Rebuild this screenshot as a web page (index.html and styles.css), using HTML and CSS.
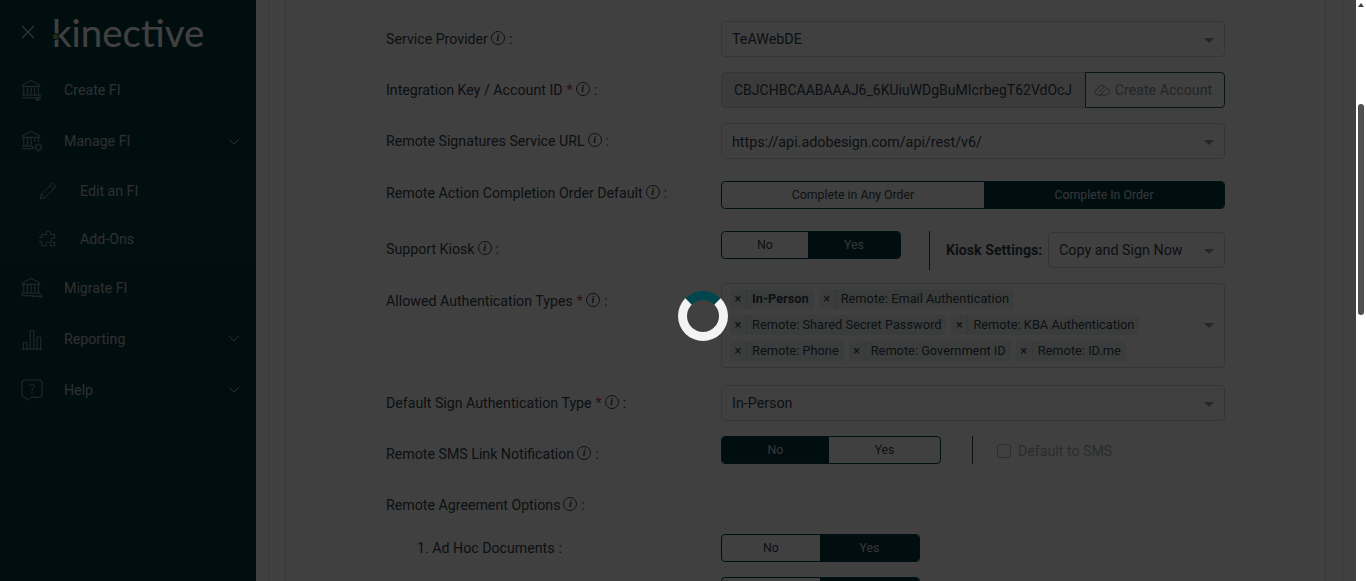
FILE: index.html
```html
<!DOCTYPE html>
<html lang="en">
<head>
    <meta charset="UTF-8">
    <meta name="viewport" content="width=device-width, initial-scale=1.0">
    <title>Edit an FI</title>
    <link rel="stylesheet" href="styles.css">
</head>
<body>

<div class="app">
    <aside class="sidebar">
        <div class="brand">
            <svg class="close-icon" viewBox="0 0 14 14"><path d="M1 1l12 12M13 1L1 13"/></svg>
            <span class="logo">kinective<i class="logo-dot"></i></span>
        </div>

        <nav class="menu">
            <a class="menu-item menu-item-a">
                <svg class="menu-icon" viewBox="0 0 24 24"><path d="M1.500 6.500L11 1.500l9.500 5v1.500h-19zM3 8v9M19 8v9M7 8v9M11 8v9M15 8v9M1 17.500h20v3H1M18 19v5M15.500 22.500h6"/></svg>
                <span class="menu-text">Create FI</span>
            </a>
            <a class="menu-item menu-item-b">
                <svg class="menu-icon" viewBox="0 0 24 24"><path d="M1.500 6.500L11 1.500l9.500 5v1.500h-19zM3 8v9M19 8v5M7 8v9M11 8v9M15 8v5M1 17.500h12v3H1M19 14v2M19 22v2M14 19h2M22 19h2M15.500 15.500l1.500 1.500M21 21l1.500 1.500M22.500 15.500L21 17M17 21l-1.500 1.500"/><circle cx="19" cy="19" r="3"/></svg>
                <span class="menu-text">Manage FI</span>
                <svg class="chevron" viewBox="0 0 12 7"><path d="M1 1l5 5 5-5"/></svg>
            </a>
            <div class="submenu">
                <a class="sub-item">
                    <svg class="menu-icon" viewBox="0 0 20 20"><path d="M1.500 18.500l1-5L13.500 2.500a2 2 0 0 1 3 0l1 1a2 2 0 0 1 0 3L6.500 17.500zM2.500 13.500l4 4M12 4l4 4"/></svg>
                    <span class="menu-text">Edit an FI</span>
                </a>
                <a class="sub-item sub-item-b">
                    <svg class="menu-icon" viewBox="0 0 20 20"><path d="M8 3.500a2.500 2.500 0 0 1 5 0c0 .8-.5 1-.5 1.500h5v4.500c-.5 0-.8-.5-1.500-.5a2.500 2.500 0 0 0 0 5c.7 0 1-.5 1.500-.5v4h-5c0-.5.500-.8.500-1.500a2.500 2.500 0 0 0-5 0c0 .7.500 1 .500 1.500H3v-5c-.5 0-.8.500-1.500.500a2.500 2.500 0 0 1 0-5C2.200 8 2.500 8.500 3 8.500V5h5.500C8.500 4.500 8 4.300 8 3.500z"/></svg>
                    <span class="menu-text">Add-Ons</span>
                </a>
            </div>
            <a class="menu-item menu-item-b">
                <svg class="menu-icon" viewBox="0 0 24 24"><path d="M1.500 6.500L11 1.500l9.500 5v1.500h-19zM3 8v9M19 8v9M7 8v9M11 8v9M15 8v9M1 17.500h20M1 17.500v3h13M12 21h11M20 18l3 3-3 3"/></svg>
                <span class="menu-text">Migrate FI</span>
            </a>
            <a class="menu-item">
                <svg class="menu-icon" viewBox="0 0 24 24"><path d="M1 23h22M2.500 23v-7h4v7M10 23V3h4v20M17.500 23V10h4v13"/></svg>
                <span class="menu-text">Reporting</span>
                <svg class="chevron" viewBox="0 0 12 7"><path d="M1 1l5 5 5-5"/></svg>
            </a>
            <a class="menu-item">
                <svg class="menu-icon" viewBox="0 0 24 24"><path d="M4 1h16a3 3 0 0 1 3 3v13a3 3 0 0 1-3 3H11l-4 3-2-3H4a3 3 0 0 1-3-3V4a3 3 0 0 1 3-3zM9.500 8a2.500 2.500 0 1 1 3.500 2.300c-.7.400-1 .9-1 1.700M12 14v2"/></svg>
                <span class="menu-text">Help</span>
                <svg class="chevron" viewBox="0 0 12 7"><path d="M1 1l5 5 5-5"/></svg>
            </a>
        </nav>
    </aside>

    <main class="content">
        <div class="card-outer">
            <div class="card-inner">
                <div class="form-grid">
                    <div class="form-label">Service Provider<i class="info">i</i><span class="colon">:</span></div>
                    <div class="select">TeAWebDE</div>

                    <div class="form-label">Integration Key / Account ID<b class="req">*</b><i class="info">i</i><span class="colon">:</span></div>
                    <div class="input-group">
                        <div class="input-value">CBJCHBCAABAAAJ6_6KUiuWDgBuMIcrbegT62VdOcJ</div>
                        <div class="input-btn">
                            <svg class="cloud-icon" viewBox="0 0 16 12"><path d="M4 11a3 3 0 0 1-.5-6A4.500 4.500 0 0 1 12 4a3.500 3.500 0 0 1 0 7zM5 8l5-5M6 11l6-6"/></svg>
                            Create Account
                        </div>
                    </div>

                    <div class="form-label">Remote Signatures Service URL<i class="info">i</i><span class="colon">:</span></div>
                    <div class="select select-url">https://api.adobesign.com/api/rest/v6/</div>

                    <div class="form-label label-toggle">Remote Action Completion Order Default<i class="info">i</i><span class="colon">:</span></div>
                    <div class="toggle">
                        <span class="seg seg-order-a">Complete in Any Order</span>
                        <span class="seg seg-order-b active">Complete In Order</span>
                    </div>

                    <div class="form-label">Support Kiosk<i class="info">i</i><span class="colon">:</span></div>
                    <div class="control-row">
                        <div class="toggle">
                            <span class="seg seg-87">No</span>
                            <span class="seg seg-92 active">Yes</span>
                        </div>
                        <span class="divider divider-kiosk"></span>
                        <strong class="kiosk-label">Kiosk Settings:</strong>
                        <div class="select select-kiosk">Copy and Sign Now</div>
                    </div>

                    <div class="form-label">Allowed Authentication Types<b class="req">*</b><i class="info">i</i><span class="colon">:</span></div>
                    <div class="multi-select">
                        <div class="chip-row">
                            <span class="chip"><i class="chip-x">×</i><b class="chip-text">In-Person</b></span>
                            <span class="chip"><i class="chip-x">×</i><span class="chip-text">Remote: Email Authentication</span></span>
                        </div>
                        <div class="chip-row">
                            <span class="chip"><i class="chip-x">×</i><span class="chip-text">Remote: Shared Secret Password</span></span>
                            <span class="chip"><i class="chip-x">×</i><span class="chip-text">Remote: KBA Authentication</span></span>
                        </div>
                        <div class="chip-row">
                            <span class="chip"><i class="chip-x">×</i><span class="chip-text">Remote: Phone</span></span>
                            <span class="chip"><i class="chip-x">×</i><span class="chip-text">Remote: Government ID</span></span>
                            <span class="chip"><i class="chip-x">×</i><span class="chip-text">Remote: ID.me</span></span>
                        </div>
                    </div>

                    <div class="form-label">Default Sign Authentication Type<b class="req">*</b><i class="info">i</i><span class="colon">:</span></div>
                    <div class="select">In-Person</div>

                    <div class="form-label">Remote SMS Link Notification<i class="info">i</i><span class="colon">:</span></div>
                    <div class="control-row">
                        <div class="toggle">
                            <span class="seg seg-108 active">No</span>
                            <span class="seg seg-111">Yes</span>
                        </div>
                        <span class="divider divider-sms"></span>
                        <span class="check-box"></span>
                        <span class="check-label">Default to SMS</span>
                    </div>

                    <div class="form-label form-label-wide">Remote Agreement Options<i class="info">i</i><span class="colon">:</span></div>

                    <div class="form-label label-sub">1. Ad Hoc Documents<span class="colon">:</span></div>
                    <div class="toggle">
                        <span class="seg seg-98">No</span>
                        <span class="seg seg-99 active">Yes</span>
                    </div>

                    <div class="form-label label-sub"></div>
                    <div class="toggle">
                        <span class="seg seg-98"></span>
                        <span class="seg seg-99 active"></span>
                    </div>
                </div>
            </div>
        </div>
    </main>

    <div class="scrollbar">
        <span class="scroll-arrow"></span>
        <span class="scroll-thumb"></span>
    </div>
</div>

<div class="overlay">
    <div class="spinner"></div>
</div>

</body>
</html>
```

FILE: styles.css
```css
* {
    box-sizing: border-box;
}

html, body {
    height: 100%;
    margin: 0;
    overflow: hidden;
}

body {
    font-family: Roboto, 'Liberation Sans', sans-serif;
    font-size: 14.2px;
    color: #36404a;
    background-color: #fff;
}

.app {
    display: flex;
    height: 100vh;
}

/* sidebar */
.sidebar {
    width: 256px;
    flex-shrink: 0;
    background-color: #043a42;
    color: #b8bcbe;
}

.brand {
    display: flex;
    align-items: center;
    height: 64px;
    padding-left: 21px;
}

.close-icon {
    width: 14px;
    height: 14px;
    fill: none;
    stroke: #d0d0d0;
    stroke-width: 1.2;
}

.logo {
    position: relative;
    margin-left: 17px;
    font-family: Lato, sans-serif;
    font-weight: 400;
    font-size: 38.500px;
    line-height: 40px;
    color: #fff;
}

.logo-dot {
    position: absolute;
    left: 1px;
    top: 22px;
    width: 5px;
    height: 5px;
    border-radius: 50%;
    background-color: #6ac04a;
    box-shadow: 0 0 0 1px #043a42;
}

.menu {
    display: flex;
    flex-direction: column;
}

.menu-item,
.sub-item {
    display: flex;
    align-items: center;
    height: 51px;
    padding-left: 21px;
}

.menu-item-a {
    height: 52px;
}

.menu-item-b {
    height: 50px;
}

.menu-icon {
    width: 22px;
    height: 22px;
    flex-shrink: 0;
    fill: none;
    stroke: #a8b0b0;
    stroke-width: 1;
}

.menu-text {
    margin-left: 21px;
    font-size: 14.2px;
}

.chevron {
    width: 12px;
    height: 7px;
    margin-left: auto;
    margin-right: 16px;
    fill: none;
    stroke: #a8b0b0;
    stroke-width: 1;
}

.submenu {
    background-color: #053d45;
}

.sub-item {
    height: 49px;
    padding-left: 39px;
}

.sub-item-b {
    height: 48px;
}

.sub-item .menu-icon {
    width: 18px;
    height: 18px;
}

.sub-item .menu-text {
    margin-left: 23px;
}

/* main area */
.content {
    flex: 1;
    padding-left: 12px;
    padding-right: 13px;
    overflow: hidden;
}

.card-outer {
    height: 100%;
    padding: 0 16px;
    border-left: 1px solid #dfdfdf;
    border-right: 1px solid #dfdfdf;
}

.card-inner {
    height: 100%;
    padding: 21px 0 0 100px;
    border-left: 1px solid #dfdfdf;
    border-right: 1px solid #dfdfdf;
}

.form-grid {
    display: grid;
    grid-template-columns: 335px 504px;
    grid-template-rows: 51px 51px 58px 50px 52px 102px 51px 51px 47px 43px 43px;
    align-items: start;
}

.form-label {
    display: flex;
    align-items: center;
    padding-top: 8px;
    line-height: 20px;
}

.label-toggle {
    padding-top: 2px;
}

.form-label-wide {
    grid-column: 1 / 3;
}

.label-sub {
    padding-top: 4px;
    padding-left: 31px;
}

.info {
    display: inline-flex;
    align-items: center;
    justify-content: center;
    width: 14px;
    height: 14px;
    margin-left: 3px;
    margin-bottom: 3px;
    border: 1px solid #36404a;
    border-radius: 50%;
    font-family: 'Liberation Serif', serif;
    font-size: 10px;
    font-weight: bold;
}

.colon {
    margin-left: 4px;
}

.req {
    margin-left: 4px;
    color: #c0392b;
    font-weight: normal;
}

.select {
    position: relative;
    height: 36px;
    padding: 0 40px 0 10px;
    border: 1px solid #ced4da;
    border-radius: 4px;
    font-size: 14.3px;
    line-height: 35px;
}

.select-url {
    line-height: 37px;
}

.select::after {
    content: "";
    position: absolute;
    right: 10px;
    top: 16px;
    border-style: solid;
    border-width: 5px 5px 0;
    border-color: #8a9299 transparent transparent;
}

.input-group {
    display: flex;
    height: 36px;
}

.input-value {
    width: 364px;
    padding-left: 12px;
    background-color: #e9ecef;
    border: 1px solid #ced4da;
    border-right: 0;
    border-radius: 4px 0 0 4px;
    font-size: 14px;
    line-height: 34px;
    white-space: nowrap;
}

.input-btn {
    flex: 1;
    display: flex;
    align-items: center;
    justify-content: center;
    gap: 5px;
    padding-right: 4px;
    border: 1px solid #20545f;
    border-radius: 0 4px 4px 0;
    color: #8a9299;
}

.cloud-icon {
    width: 16px;
    height: 12px;
    fill: none;
    stroke: #8a9299;
    stroke-width: 1;
}

.toggle {
    display: flex;
    width: fit-content;
    height: 28px;
    border: 1px solid #04404c;
    border-radius: 4px;
    overflow: hidden;
    font-size: 12.3px;
}

.seg {
    display: flex;
    align-items: center;
    justify-content: center;
    padding-bottom: 1px;
}

.seg.active {
    background-color: #043a42;
    color: #d4d9da;
}

.seg-order-a { width: 262px; }
.seg-order-b { width: 240px; }
.seg-87 { width: 86px; }
.seg-92 { width: 92px; }
.seg-108 { width: 107px; }
.seg-111 { width: 111px; }
.seg-98 { width: 98px; }
.seg-99 { width: 99px; }

.control-row {
    display: flex;
    align-items: flex-start;
}

.divider {
    width: 1px;
    height: 28px;
    background-color: #36404a;
}

.divider-kiosk {
    height: 39px;
    margin-left: 28px;
}

.divider-sms {
    margin-left: 31px;
}

.kiosk-label {
    margin-left: 16px;
    padding-top: 9px;
    line-height: 20px;
    white-space: nowrap;
}

.select-kiosk {
    width: 177px;
    margin-left: auto;
    margin-top: 1px;
}

.check-box {
    width: 14px;
    height: 14px;
    margin: 8px 0 0 24px;
    border: 1px solid #a9b0b5;
    border-radius: 3px;
}

.check-label {
    margin-left: 7px;
    padding-top: 5px;
    line-height: 20px;
    color: #a9b0b5;
}

.multi-select {
    position: relative;
    height: 85px;
    padding: 5px 8px;
    border: 1px solid #ced4da;
    border-radius: 4px;
}

.multi-select::after {
    content: "";
    position: absolute;
    right: 10px;
    top: 39px;
    border-style: solid;
    border-width: 5px 5px 0;
    border-color: #8a9299 transparent transparent;
}

.chip-row {
    display: flex;
    gap: 5px;
    margin-bottom: 6px;
}

.chip {
    display: flex;
    height: 20px;
    border-radius: 2px;
    background-color: #ecf3f4;
    font-size: 12.800px;
    line-height: 20px;
}

.chip-x {
    width: 17px;
    border-right: 1px solid #d4dcde;
    text-align: center;
    font-style: normal;
}

.chip-text {
    padding: 0 5px;
}

/* scrollbar */
.scrollbar {
    position: relative;
    width: 10px;
    flex-shrink: 0;
    padding: 3px 2px 0;
    background-color: #fff;
}

.scroll-arrow {
    display: block;
    width: 0;
    border-style: solid;
    border-width: 0 3px 4px;
    border-color: transparent transparent #404040;
}

.scroll-thumb {
    display: block;
    width: 6px;
    height: 211px;
    margin-top: 97px;
    border-radius: 3px;
    background-color: #505050;
}

/* loading overlay */
.overlay {
    position: fixed;
    top: 0;
    left: 0;
    right: 10px;
    bottom: 0;
    background-color: rgba(0, 0, 0, 0.75);
}

.spinner {
    position: absolute;
    left: 678px;
    top: 291px;
    width: 50px;
    height: 50px;
    border: 9px solid #f3f3f3;
    border-top-color: #01454d;
    border-radius: 50%;
}
```
